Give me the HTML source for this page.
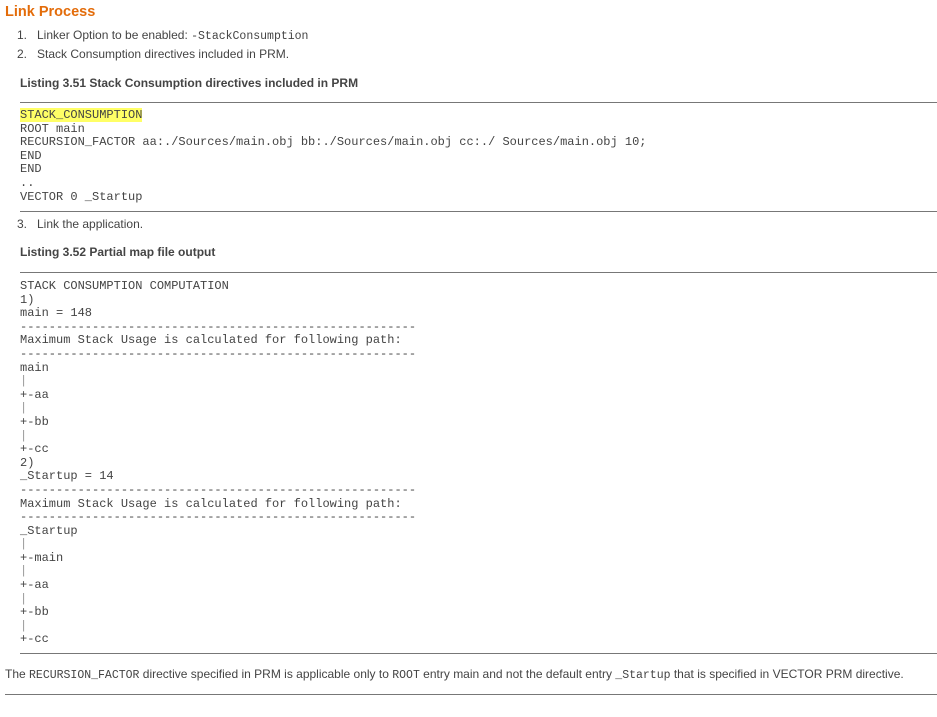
<!DOCTYPE html>
<html><head><meta charset="utf-8"><style>
body{margin:0;background:#fff;width:937px;height:717px;position:relative;overflow:hidden;font-family:"Liberation Sans",Arial,sans-serif;color:#333}
.a{position:absolute;white-space:nowrap}
h1{position:absolute;left:5px;top:4px;margin:0;font-size:14.5px;color:#e36c0a;font-weight:bold}
.li{font-size:12px;color:#444}
.t{font-size:12px;font-weight:bold;color:#444}
.hr{position:absolute;height:1px;background:#777;right:0}
pre{position:absolute;left:20px;margin:0;font-family:"Liberation Mono",monospace;font-size:12px;line-height:13.6px;color:#444}
code{font-family:"Liberation Mono",monospace;font-size:11.5px;color:#444}
.hl{background:#ffff66}
.p{color:#999}
</style></head><body>
<h1>Link Process</h1>
<div class="a li" style="left:17px;top:28px">1.&nbsp;&nbsp; Linker Option to be enabled: <code>-StackConsumption</code></div>
<div class="a li" style="left:17px;top:47px">2.&nbsp;&nbsp; Stack Consumption directives included in PRM.</div>
<div class="a t" style="left:20px;top:76px">Listing 3.51 Stack Consumption directives included in PRM</div>
<div class="hr" style="left:20px;top:102px"></div>
<pre style="top:109px"><span class="hl">STACK_CONSUMPTION</span>
ROOT main
RECURSION_FACTOR aa:./Sources/main.obj bb:./Sources/main.obj cc:./ Sources/main.obj 10;
END
END
..
VECTOR 0 _Startup</pre>
<div class="hr" style="left:20px;top:211px"></div>
<div class="a li" style="left:17px;top:217px">3.&nbsp;&nbsp; Link the application.</div>
<div class="a t" style="left:20px;top:245px">Listing 3.52 Partial map file output</div>
<div class="hr" style="left:20px;top:272px"></div>
<pre style="top:280px">STACK CONSUMPTION COMPUTATION
1)
main = 148
-------------------------------------------------------
Maximum Stack Usage is calculated for following path:
-------------------------------------------------------
main
<span class="p">|</span>
+-aa
<span class="p">|</span>
+-bb
<span class="p">|</span>
+-cc
2)
_Startup = 14
-------------------------------------------------------
Maximum Stack Usage is calculated for following path:
-------------------------------------------------------
_Startup
<span class="p">|</span>
+-main
<span class="p">|</span>
+-aa
<span class="p">|</span>
+-bb
<span class="p">|</span>
+-cc</pre>
<div class="hr" style="left:20px;top:653px"></div>
<div class="a li" style="left:5px;top:667px">The <code>RECURSION_FACTOR</code> directive specified in PRM is applicable only to <code>ROOT</code> entry main and not the default entry <code>_Startup</code> that is specified in VECTOR PRM directive.</div>
<div class="hr" style="left:5px;top:694px"></div>
</body></html>
